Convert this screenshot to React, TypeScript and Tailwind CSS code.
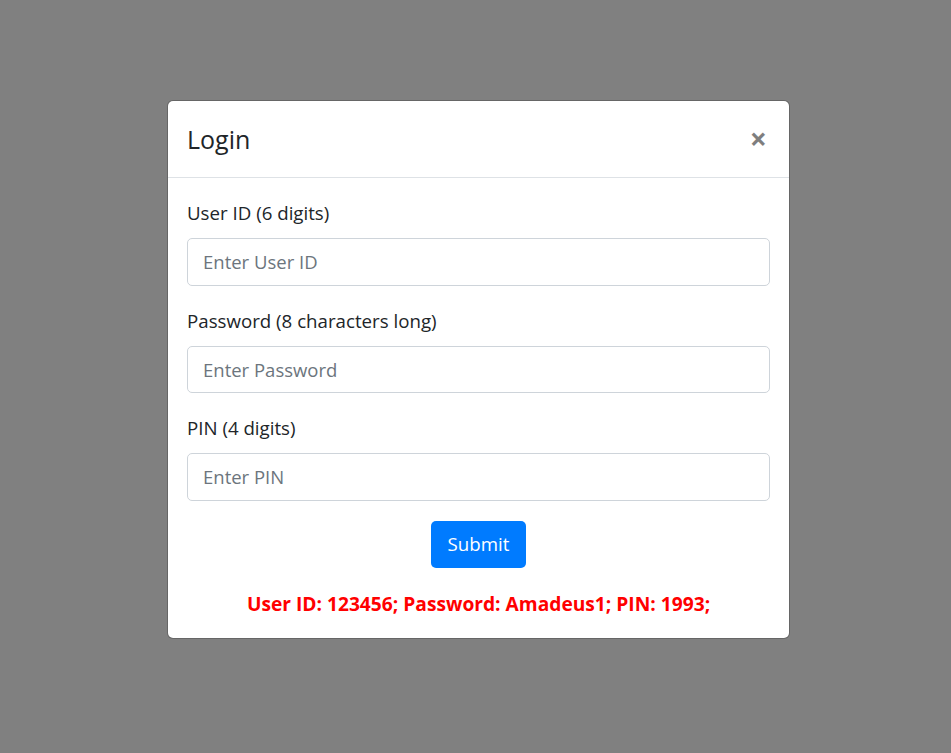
import React from "react";

export default function App() {
  return (
    <div
      className="min-h-[753px] w-full bg-[#808080] pt-[100px] pl-[167px]"
      style={{ fontFamily: '"Open Sans", "Noto Sans", sans-serif' }}
    >
      <div className="w-[623px] rounded-[6px] border border-[rgba(0,0,0,0.2)] bg-white bg-clip-padding">
        <div className="flex items-start justify-between border-b border-[#dee2e6] px-[19px] pt-[20px] pb-[19px]">
          <h5 className="text-[25px] leading-[37px] font-medium text-[#212529]">Login</h5>
          <button className="mt-[-1px] mr-[3px] text-[30px] leading-[37px] font-bold text-black opacity-50">
            ×
          </button>
        </div>
        <div className="px-[19px] pt-[20px] pb-[19px]">
          {[
            ["User ID (6 digits)", "Enter User ID"],
            ["Password (8 characters long)", "Enter Password"],
            ["PIN (4 digits)", "Enter PIN"],
          ].map(([label, ph]) => (
            <div key={label} className="mb-[20px]">
              <label className="mb-[10px] block text-[18.7px] leading-[30px] text-[#212529]">{label}</label>
              <input
                placeholder={ph}
                className="block h-[47.5px] w-full rounded-[5px] border border-[#ced4da] px-[15px] text-[18.5px] text-[#495057] placeholder:text-[#6c757d] outline-none"
              />
            </div>
          ))}
          <div className="flex justify-center">
            <button className="h-[47px] rounded-[5px] bg-[#007bff] px-[16.5px] text-[18.7px] leading-[30px] text-white">
              Submit
            </button>
          </div>
          <p className="mt-[21px] text-center text-[19.2px] leading-[30px] font-bold text-[#ff0000]">
            User ID: 123456; Password: Amadeus1; PIN: 1993;
          </p>
        </div>
      </div>
    </div>
  );
}
